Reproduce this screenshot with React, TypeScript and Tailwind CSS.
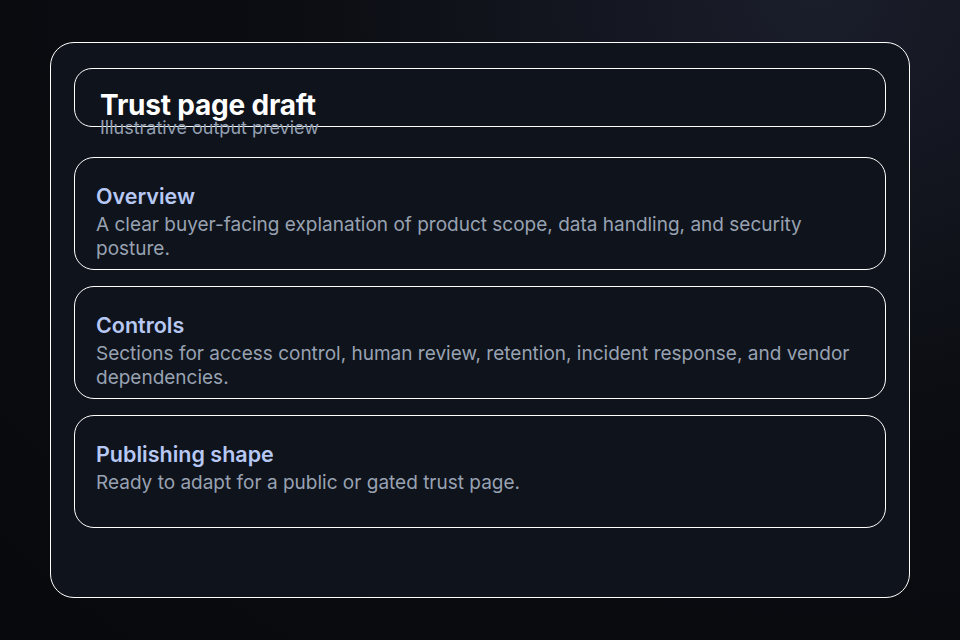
export default function App() {
  const cards = [
    ["Overview", "A clear buyer-facing explanation of product scope, data handling, and security posture."],
    ["Controls", "Sections for access control, human review, retention, incident response, and vendor dependencies."],
    ["Publishing shape", "Ready to adapt for a public or gated trust page."],
  ];
  return (
    <div className="w-[960px] h-[640px] overflow-hidden bg-[radial-gradient(ellipse_at_85%_0%,#1a1e2b_0%,#0b0d12_45%,#08090c_100%)] px-[50px] pt-[42px]" style={{ fontFamily: "Inter, 'Noto Sans', sans-serif" }}>
      <div className="h-[556px] rounded-[24px] border border-white bg-[#0f131b] px-[23px] pt-[25px] flex flex-col gap-[16px]">
        <div className="h-[59px] shrink-0 mb-[14px] rounded-[18px] border border-white px-[25px] pt-[20px]">
          <div className="text-[28px] leading-[32px] font-bold text-white tracking-[-0.2px]">Trust page draft</div>
          <div className="-mt-[3px] text-[18px] leading-[20px] text-[#94a0b2]">Illustrative output preview</div>
        </div>
        {cards.map(([t, b]) => (
          <div key={t} className="h-[113px] shrink-0 rounded-[20px] border border-white px-[21px] pt-[23px]">
            <div className="text-[21.5px] leading-[30px] font-semibold text-[#b6c8f3]">{t}</div>
            <div className="mt-[2px] text-[19px] leading-[24px] text-[#98a2b2]">{b}</div>
          </div>
        ))}
      </div>
    </div>
  );
}
